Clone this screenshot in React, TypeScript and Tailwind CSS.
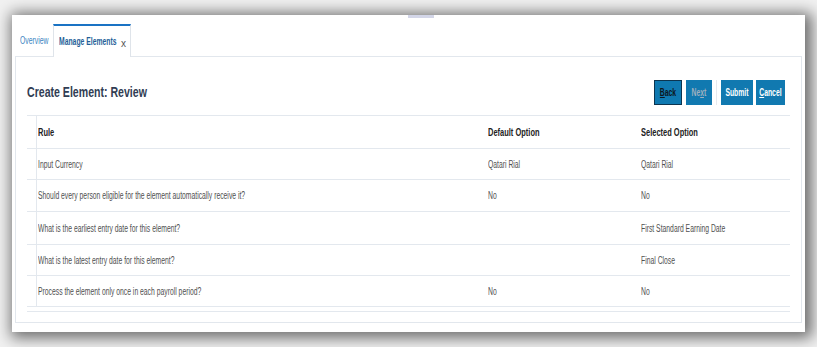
import type { ReactNode } from "react";

// text in the capture is squeezed horizontally, so each label is narrowed
const Sq = ({ children, c = "origin-left" }: { children: ReactNode; c?: string }) => (
    <span className={`inline-block whitespace-nowrap scale-x-[0.68] ${c}`}>{children}</span>
);

const rows = [
    { rule: "Input Currency", def: "Qatari Rial", sel: "Qatari Rial", h: "h-[31px]" },
    { rule: "Should every person eligible for the element automatically receive it?", def: "No", sel: "No", h: "h-[32px]" },
    { rule: "What is the earliest entry date for this element?", def: "", sel: "First Standard Earning Date", h: "h-[33px]" },
    { rule: "What is the latest entry date for this element?", def: "", sel: "Final Close", h: "h-[31px]" },
    { rule: "Process the element only once in each payroll period?", def: "No", sel: "No", h: "h-[31px]" },
];

const App = () => {
    return (
        <div className="w-[817px] h-[347px] bg-[#f1f1f1] pt-[15px] pl-[12px] font-['Liberation_Sans',Arial,sans-serif] overflow-hidden">
            <div className="relative w-[793px] h-[317px] bg-white px-[3px] shadow-[3px_2px_14px_4px_rgba(0,0,0,0.55)]">
                {/* splitter handle */}
                <div className="absolute left-[396px] top-0 w-[26px] h-[3px] bg-[#d3d6e8]" />

                {/* tabs */}
                <div className="flex items-end h-[41px]">
                    <div className="w-[38px] h-[32px] pl-[5px] flex items-center text-[10px] text-[#3d86c2]">
                        <Sq>Overview</Sq>
                    </div>
                    <div className="relative z-10 -mb-px w-[78px] h-[33px] bg-white border-x border-[#dfe4ea] border-t-2 border-t-[#1a73c4] pl-[5px] flex items-center text-[10px]">
                        <div className="w-[62px]">
                            <Sq c="origin-left font-bold text-[#1f5f98]">Manage Elements</Sq>
                        </div>
                        <span className="text-[10px] text-[#555] mt-[3px]">x</span>
                    </div>
                </div>

                {/* content frame */}
                <div className="h-[267px] border border-[#e2e7ed] pl-[11px] pt-[22px]">
                    <div className="w-[763px] h-[26px] flex items-center justify-between pr-[5px]">
                        <div className="w-[120px]">
                            <Sq c="origin-left scale-x-[0.705] text-[15px] font-bold text-[#313d53]">Create Element: Review</Sq>
                        </div>
                        <div className="flex items-center h-[26px] text-[10px] font-bold">
                            <button className="w-[28px] h-[25px] bg-[#0f79b1] border border-[#0c3550] flex items-center justify-center text-[#0d1620]">
                                <Sq c="origin-center"><span className="underline">B</span>ack</Sq>
                            </button>
                            <button className="ml-[4px] w-[26px] h-[25px] bg-[#1179b0] flex items-center justify-center text-[#9fb0bf]">
                                <Sq c="origin-center">Ne<span className="underline">x</span>t</Sq>
                            </button>
                            <div className="mx-[4px] w-px h-[25px] bg-[#e6e9ee]" />
                            <button className="w-[32px] h-[25px] bg-[#1179b0] flex items-center justify-center text-white">
                                <Sq c="origin-center">Submit</Sq>
                            </button>
                            <button className="ml-[3px] w-[29px] h-[25px] bg-[#1179b0] flex items-center justify-center text-white">
                                <Sq c="origin-center"><span className="underline">C</span>ancel</Sq>
                            </button>
                        </div>
                    </div>

                    {/* review table */}
                    <div className="mt-[10px] w-[763px]">
                        <div className="flex h-[33px] border-t border-[#e3e8ee] text-[11px] font-bold text-[#222]">
                            <div className="w-[10px] border-r border-[#e3e8ee]" />
                            <div className="w-[448px] pl-[1px] flex items-center"><Sq>Rule</Sq></div>
                            <div className="w-[154px] pl-[3px] flex items-center"><Sq>Default Option</Sq></div>
                            <div className="flex-1 pl-[2px] flex items-center"><Sq>Selected Option</Sq></div>
                        </div>
                        {rows.map((r, i) => (
                            <div key={i} className={`flex ${r.h} border-t border-[#e3e8ee] text-[10px] text-[#505050]`}>
                                <div className="w-[10px] border-r border-[#e3e8ee]" />
                                <div className="w-[448px] pl-[1px] flex items-center"><Sq>{r.rule}</Sq></div>
                                <div className="w-[154px] pl-[3px] flex items-center"><Sq>{r.def}</Sq></div>
                                <div className="flex-1 pl-[2px] flex items-center"><Sq>{r.sel}</Sq></div>
                            </div>
                        ))}
                        <div className="h-[6px] border-y border-[#e3e8ee]" />
                    </div>
                </div>
            </div>
        </div>
    );
};

export default App;
